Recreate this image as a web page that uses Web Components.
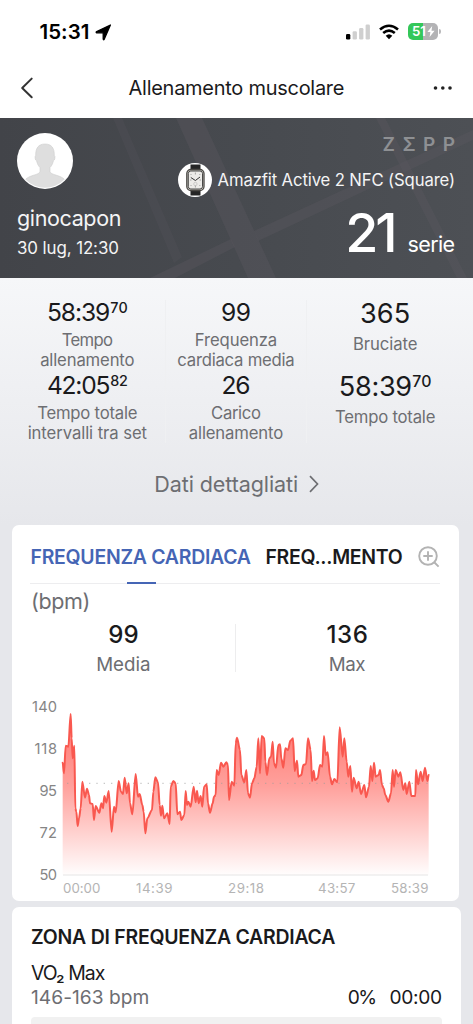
<!DOCTYPE html>
<html lang="it">
<head>
<meta charset="utf-8">
<title>Allenamento muscolare</title>
<style>
html,body{margin:0;height:1024px;overflow:hidden;background:#e6e7eb}
body{font-family:Inter,"Liberation Sans",sans-serif;color:#1a1a1c}
</style>
</head>
<body>
<workout-screen></workout-screen>
<script>
const define=(name,html,setup)=>customElements.define(name,class extends HTMLElement{
  connectedCallback(){
    if(this.shadowRoot)return;
    const root=this.attachShadow({mode:'open'});
    root.innerHTML=html;
    if(setup)setup(this,root);
  }
});

/* Single line of text tracked out to a given width: w = width, s = size, l = line height, b = weight */
define('fit-text','<style>:host{display:block;white-space:nowrap;flex:none}span{display:inline-block}</style><span><slot></slot></span>',(el,root)=>{
  const span=root.querySelector('span');
  el.style.fontSize=el.getAttribute('s')*1.025+'px';
  el.style.lineHeight=el.getAttribute('l')+'px';
  if(el.hasAttribute('b'))el.style.fontWeight=el.getAttribute('b');
  const w=+el.getAttribute('w')-.6,n=el.textContent.length;
  if(w>0){
    const ls=(w-span.getBoundingClientRect().width)/(n-1);
    span.style.letterSpacing=ls+'px';
    span.style.marginRight=-ls+'px';
  }
});

define('status-bar',`<style>
:host{display:flex;height:58px;padding:6px 32px 0 39.500px;box-sizing:border-box;align-items:center;background:#fff;color:#000}
.loc{margin-left:6px}.gap{flex:1}.sig{margin-right:9px}.wifi{margin-right:9px}
.bat{display:flex;width:30px;height:17px;border-radius:5px;background:linear-gradient(90deg,#34c759 51%,#b3b3b5 51%);color:#fff;align-items:center;box-sizing:border-box;padding-left:4px;margin-top:-1px}
.nub{margin-left:1px;width:2px;height:5px;border-radius:0 2px 2px 0;background:#b9b9bb;margin-top:-1px}
</style>
<fit-text w="50.5" s="20" l="20" b="600">15:31</fit-text>
<svg class="loc" width="17" height="17" viewBox="0 0 17 17"><path d="M15.4 1 9.200 15.300Q8.500 16.300 8.200 15.200V8.800H1.700Q.6 8.300 1.700 7.600Z" stroke="#000" stroke-width="1.300" stroke-linejoin="round"/></svg>
<div class="gap"></div>
<svg class="sig" width="24" height="16" viewBox="0 0 24 16"><rect x="0" y="10" width="4.3" height="5.5" rx="1.3"/><g fill="#cfcfcf"><rect x="6.6" y="7.2" width="4.3" height="8.3" rx="1.3"/><rect x="13.1" y="4" width="4.3" height="11.5" rx="1.3"/><rect x="19.6" y=".5" width="4.3" height="15" rx="1.3"/></g></svg>
<svg class="wifi" width="20" height="16" viewBox="0 0 20 16" fill="none" stroke="#000" stroke-width="2.6"><path d="M1 5.5Q10-2 19 5.5"/><path d="M4.2 9Q10 4.1 15.8 9"/><path d="M6.7 11.8Q10 8.8 13.3 11.8L10 15.2Z" fill="#000" stroke="none"/></svg>
<div class="bat"><fit-text w="14.500" s="13" l="17" b="600">51</fit-text><svg width="8" height="11" viewBox="0 0 8 11" style="margin-left:1px"><path d="M5.2 0 .4 6H3.4L2.6 11 7.6 4.7H4.5Z" fill="#fff"/></svg></div><div class="nub"></div>`);

define('nav-bar',`<style>
:host{display:grid;grid-template-columns:60px 1fr 60px;height:60px;align-items:center;justify-items:center;background:#fff}
.back{justify-self:start;margin-left:20px}.more{justify-self:end;margin-right:20px}
</style>
<svg class="back" width="14" height="22" viewBox="0 0 14 22" fill="none" stroke="#333" stroke-width="2" stroke-linecap="round" stroke-linejoin="round"><path d="M11.7 1.6 2.2 11 11.7 20.2"/></svg>
<fit-text w="216.5" s="19.5" l="24">Allenamento muscolare</fit-text>
<svg class="more" width="20" height="6" viewBox="0 0 20 6" fill="#222"><circle cx="2.5" cy="3" r="1.8"/><circle cx="9.8" cy="3" r="1.8"/><circle cx="17" cy="3" r="1.8"/></svg>`);

define('user-avatar',`<style>:host,svg{display:block}</style>
<svg width="56" height="56" viewBox="0 0 56 56"><clipPath id="c"><circle cx="28" cy="28" r="26.8"/></clipPath><circle cx="28" cy="28" r="28" fill="#fff"/><path clip-path="url(#c)" d="M28 11C21.500 11 18.500 15 18.700 22.500 17.500 23 18 27.500 19.700 28 20.200 31 21.500 33 23 34.500V38.500C22.500 41 18 41.500 13 43.500 9.500 45 7.500 47 6.500 49V56H49.500V49C48.500 47 46.500 45 43 43.500 38 41.500 33.500 41 33 38.500V34.500C34.500 33 35.800 31 36.300 28 38 27.500 38.500 23 37.300 22.500 37.500 15 34.500 11 28 11Z" fill="#dedede" stroke="#cfcfcf" stroke-width=".6"/></svg>`);

define('watch-icon',`<style>:host,svg{display:block}</style>
<svg width="34" height="34" viewBox="0 0 34 34"><circle cx="17" cy="17" r="17" fill="#fff"/><path d="M12.500 1.500H22.500V8H12.500ZM12.500 26H22.500V32.500H12.500Z" fill="#252525"/><rect x="8.800" y="6.500" width="17.200" height="21" rx="4" fill="#d6d4ce" stroke="#4b4945" stroke-width="1.300"/><rect x="10.300" y="8" width="14.200" height="18" rx="2.500" fill="#ecebe8" stroke="#222" stroke-width=".8"/><path d="M17.400 9.500V11.500M17.400 22.500V24.500M12 17H13.500M21.500 17H23M12.500 11 13.500 12M22.300 11 21.300 12M12.500 23 13.500 22M22.300 23 21.300 22" stroke="#888" stroke-width=".7"/><path d="M12.800 14.500 17.400 17.500 22 14" fill="none" stroke="#333" stroke-width="1"/><circle cx="17.400" cy="21" r="1.700" fill="none" stroke="#aaa" stroke-width=".5"/></svg>`);

define('workout-hero',`<style>
:host{display:grid;grid-template-areas:"a";height:160px;background:linear-gradient(90deg,#424449,#474a4f 50%,#4d5055);color:#f4f4f5}
.map,.row{grid-area:a}.map{display:block}
.row{display:flex;justify-content:space-between;padding:0 18px 0 17px}
.l{padding-top:14.500px}.l user-avatar{margin-bottom:14.500px}
.r{padding-top:16.500px;display:flex;flex-direction:column;align-items:flex-end;gap:9px}
.zepp{color:#8e9093}
.dev{display:flex;align-items:center;gap:5.500px;height:33.500px}
.big{display:flex;align-items:baseline;gap:10px;height:54px;color:#fff}
</style>
<svg class="map" width="473" height="160" viewBox="0 0 473 160"><g fill="#5b5860"><path opacity=".4" d="M176 0H202L276 160H248Z"/><path opacity=".22" d="M113 0H122L182 139 174 145Z"/><path opacity=".4" d="M150 160 231 121 235 129 175 160ZM254 113 473 12V22L258 123Z"/><path opacity=".4" d="M376 0H385L467 160H457Z"/></g></svg>
<div class="row"><div class="l"><user-avatar></user-avatar><fit-text w="105" s="21" l="30">ginocapon</fit-text><fit-text w="102.500" s="16.500" l="30">30 lug, 12:30</fit-text></div>
<div class="r"><fit-text class="zepp" w="73" s="18.600" l="20" b="600">ZΣPP</fit-text>
<div class="dev"><watch-icon></watch-icon><fit-text w="238" s="16.300" l="34">Amazfit Active 2 NFC (Square)</fit-text></div>
<div class="big"><fit-text w="53" s="52.500" l="54" b="500">21</fit-text><fit-text w="48" s="21" l="54">serie</fit-text></div></div></div>`);

define('stat-cell',`<style>
:host{display:flex;flex-direction:column;align-items:center;height:70px}
.v{display:flex;margin:0 0 6px}.lab{color:#6d6e72;display:flex;flex-direction:column;align-items:center}
::slotted([slot=sup]){margin-top:1px}
</style><div class="v"><slot name="value"></slot><slot name="sup"></slot></div><div class="lab"><slot></slot></div>`);

define('stats-panel',`<style>
:host{display:block;height:247px;box-sizing:border-box;padding-top:22px;background:linear-gradient(#f6f7f9,#e6e7eb)}
.cols{display:flex;padding:0 9.500px;height:143px}
.col{display:flex;flex-direction:column;gap:3px;box-sizing:border-box;width:157px}
.col:first-child{width:156px}.col:nth-child(2){width:142px;border:solid #eff0f2;border-width:0 1px}
.more{display:flex;align-items:center;justify-content:center;margin-top:26px;gap:10.500px;color:#6d6e72}
</style>
<div class="cols">
<div class="col">
<stat-cell><fit-text slot="value" w="64" s="24" l="24">58:39</fit-text><fit-text slot="sup" w="18" s="14" l="14" b="500">70</fit-text><fit-text w="52" s="16.300" l="20">Tempo</fit-text><fit-text w="95" s="16.300" l="20">allenamento</fit-text></stat-cell>
<stat-cell><fit-text slot="value" w="64" s="24" l="24">42:05</fit-text><fit-text slot="sup" w="18" s="14" l="14" b="500">82</fit-text><fit-text w="101" s="16.300" l="20">Tempo totale</fit-text><fit-text w="120" s="16.300" l="20">intervalli tra set</fit-text></stat-cell>
</div>
<div class="col">
<stat-cell><fit-text slot="value" w="30.500" s="24" l="24">99</fit-text><fit-text w="83" s="16.300" l="20">Frequenza</fit-text><fit-text w="118" s="16.300" l="20">cardiaca media</fit-text></stat-cell>
<stat-cell><fit-text slot="value" w="29.500" s="24" l="24">26</fit-text><fit-text w="50.500" s="16.300" l="20">Carico</fit-text><fit-text w="95" s="16.300" l="20">allenamento</fit-text></stat-cell>
</div>
<div class="col">
<stat-cell><fit-text slot="value" w="51" s="26.500" l="28">365</fit-text><fit-text w="65" s="16.300" l="20">Bruciate</fit-text></stat-cell>
<stat-cell><fit-text slot="value" w="74" s="26.500" l="28">58:39</fit-text><fit-text slot="sup" w="20" s="15.500" l="16" b="500">70</fit-text><fit-text w="101" s="16.300" l="20">Tempo totale</fit-text></stat-cell>
</div></div>
<div class="more"><fit-text w="144.500" s="21" l="30">Dati dettagliati</fit-text><svg width="10" height="18" viewBox="0 0 10 18" fill="none" stroke="#6d6e72" stroke-width="1.700"><path d="M1 1.200 8.500 9 1 16.800"/></svg></div>`);

define('heart-chart',`<style>
:host{display:grid;grid-template-columns:26px 366px;column-gap:6px;margin:9.500px 0 0 19px}
.y{color:#858585;display:flex;flex-direction:column;align-items:flex-end}
.p{padding-top:9px}.p svg{display:block;overflow:visible}
.x{display:grid;grid-template-columns:73px 92px 90px 73px 38px;color:#b4b4b4;padding-top:5px}
</style>
<div class="y"><fit-text w="25.500" s="14.300" l="42">140</fit-text><fit-text w="23" s="14.300" l="42">118</fit-text><fit-text w="18" s="14.300" l="42">95</fit-text><fit-text w="18" s="14.300" l="42">72</fit-text><fit-text w="18" s="14.300" l="42">50</fit-text></div>
<div class="p"><svg width="366" height="180" viewBox="189 0 1098 540"><defs><linearGradient id="g" gradientUnits="userSpaceOnUse" x1="0" y1="57" x2="0" y2="540"><stop offset="0" stop-color="#ff5a52" stop-opacity=".85"/><stop offset=".45" stop-color="#ff5a52" stop-opacity=".57"/><stop offset="1" stop-color="#ff5a52" stop-opacity=".01"/></linearGradient></defs>
<path d="M189 540H1284" stroke="#e6e6e6" stroke-width="3"/><path class="f" fill="url(#g)"/><path d="M201 265H1284" stroke="#9a9a9a" stroke-opacity=".55" stroke-width="3.500" stroke-dasharray="4 18"/><path class="s" fill="none" stroke="#f9584f" stroke-width="6" stroke-linejoin="round" stroke-linecap="round"/></svg>
<div class="x"><fit-text w="38" s="13" l="16">00:00</fit-text><fit-text w="37" s="13" l="16">14:39</fit-text><fit-text w="36.500" s="13" l="16">29:18</fit-text><fit-text w="38" s="13" l="16">43:57</fit-text><fit-text w="38" s="13" l="16">58:39</fit-text></div></div>`,(el,root)=>{
  const pts=`188,203 192,235 197,152 205,155 212,57 215,130 218,190 223,152 226,340 229,350 233,393 237,370 242,340 247,260 255,308 261,281 267,300 270,325 278,327 282,375 287,333 298,353 304,325 309,340 313,303 319,323 326,288 335,410 342,335 347,352 356,258 363,290 369,297 374,248 380,295 386,265 390,325 397,358 407,237 414,305 419,297 427,330 431,350 436,415 442,370 456,345 460,290 466,247 474,262 479,330 483,362 487,332 492,370 502,355 509,387 512,275 520,258 527,265 532,358 540,350 544,375 553,360 557,288 561,330 565,320 572,335 581,275 587,322 591,287 596,325 602,303 607,335 612,275 620,268 624,325 630,353 638,325 642,305 647,300 650,225 656,240 663,203 670,215 679,202 684,210 687,315 695,260 703,272 707,145 711,128 720,165 724,240 733,262 739,225 744,295 750,308 756,265 763,250 770,215 775,130 780,235 785,123 793,130 796,200 801,240 808,190 813,185 818,140 822,205 828,218 835,150 840,148 844,190 850,218 856,160 864,165 871,137 879,130 884,228 891,197 895,245 904,240 910,210 918,207 924,130 932,165 936,258 941,227 945,255 953,250 960,210 967,215 972,123 977,180 983,172 990,245 996,268 1003,252 1012,262 1019,97 1028,185 1033,130 1040,200 1045,245 1051,213 1056,290 1061,248 1070,280 1076,260 1083,297 1093,270 1098,307 1107,275 1112,213 1117,258 1122,203 1127,245 1136,240 1140,225 1146,270 1151,280 1156,300 1165,320 1173,295 1178,225 1182,275 1187,225 1195,245 1201,232 1210,285 1216,265 1220,297 1228,260 1234,303 1246,303 1248,225 1254,268 1262,230 1268,258 1275,218 1282,258 1286,240`.split(' ').map(p=>p.split(',').map(Number));
  /* Horizontal-tangent cubic segments give rounded peaks without overshoot */
  let d='M'+pts[0];
  for(let i=1;i<pts.length;i++){
    const [a,b]=pts[i-1],[x,y]=pts[i],k=(x-a)*.3;
    d+='C'+[a+k,b,x-k,y,x,y].join(' ');
  }
  root.querySelector('.s').setAttribute('d',d);
  root.querySelector('.f').setAttribute('d',d+'V540H188Z');
});

define('metric-pair',`<style>
:host{display:flex;margin-top:9.500px}
div{flex:1;display:flex;flex-direction:column;align-items:center;gap:6px}
i{width:1px;height:48px;margin-top:1.500px;background:#ededee}
.k{color:#6d6e72}
</style>
<div><fit-text w="31" s="23.500" l="24" b="500">99</fit-text><fit-text class="k" w="55" s="18.300" l="24">Media</fit-text></div><i></i>
<div><fit-text w="42" s="23.500" l="24" b="500">136</fit-text><fit-text class="k" w="37.500" s="18.300" l="24">Max</fit-text></div>`);

define('heart-card',`<style>
:host{display:block;margin-left:12px;width:446.500px;height:376px;background:#fff;border-radius:7px}
.tabs{display:flex;align-items:center;height:59px;box-sizing:border-box;padding-top:6px;border-bottom:1px solid #ededef;margin:0 19px 0 18px;position:relative}
.on{color:#4565b5;margin-left:.5px}.off{margin-left:14.500px}
.tabs svg{margin-left:auto}
.ind{position:absolute;left:97px;bottom:-1px;width:29px;height:2.500px;background:#4565b5}
.u{color:#6d6e72;margin:5px 0 0 19px}
</style>
<div class="tabs"><fit-text class="on" w="221" s="19" l="24" b="600">FREQUENZA CARDIACA</fit-text><fit-text class="off" w="138" s="19" l="24" b="600">FREQ...MENTO</fit-text><svg width="22" height="22" viewBox="0 0 22 22" fill="none" stroke="#b3b3b3" stroke-width="1.900"><circle cx="10" cy="10" r="8.800"/><path d="M10 5.300V14.700M5.300 10H14.700M16 16 20.600 20.600"/></svg><div class="ind"></div></div>
<fit-text class="u" w="60" s="21" l="24">(bpm)</fit-text>
<metric-pair></metric-pair><heart-chart></heart-chart>`);

define('zone-card',`<style>
:host{display:block;margin:6px 0 0 12px;width:449px;height:150px;box-sizing:border-box;padding:15px 19px 0;background:#fff;border-radius:7px 7px 0 0}
.vo{margin-top:9px}.row{display:flex}.rg{color:#6d6e72;margin-right:auto}.pc{margin-right:12.500px}
.bar{height:20px;background:#f1f1f1;border-radius:4px;margin-top:8px}
</style>
<fit-text w="305" s="19" l="30" b="600">ZONA DI FREQUENZA CARDIACA</fit-text>
<fit-text class="vo" w="75" s="19" l="24">VO₂ Max</fit-text>
<div class="row"><fit-text class="rg" w="119" s="18.700" l="24">146-163 bpm</fit-text><fit-text class="pc" w="30" s="18.700" l="24">0%</fit-text><fit-text w="53" s="18.700" l="24">00:00</fit-text></div>
<div class="bar"></div>`);

define('workout-screen',`<style>:host{display:block;width:473px;height:1024px;overflow:hidden}</style>
<status-bar></status-bar><nav-bar></nav-bar><workout-hero></workout-hero><stats-panel></stats-panel><heart-card></heart-card><zone-card></zone-card>`);
</script>
</body>
</html>
